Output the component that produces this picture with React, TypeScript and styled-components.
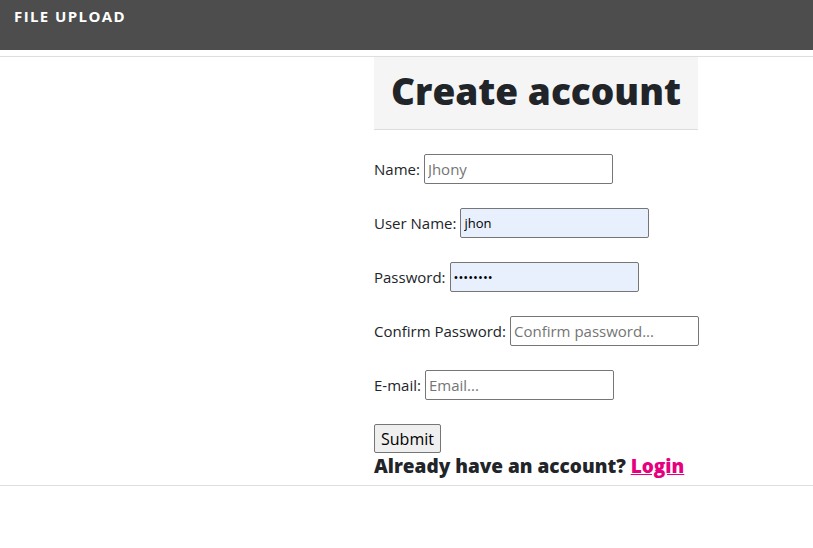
import React from "react";
import styled, { createGlobalStyle } from "styled-components";

const GlobalStyle = createGlobalStyle`
  body {
    margin: 0;
    font-family: "Open Sans", "Noto Sans", sans-serif;
    color: #212529;
    background: #ffffff;
  }
`;

const TopBar = styled.header`
  height: 50px;
  background-color: #4d4d4d;
  padding: 5px 14px 0;
  box-sizing: border-box;
`;

const Brand = styled.span`
  color: #ffffff;
  font-size: 15px;
  font-weight: 700;
  letter-spacing: 1.4px;
`;

const Page = styled.main`
  margin-top: 6px;
  border-top: 1px solid #dedede;
  border-bottom: 1px solid #dedede;
  display: grid;
  grid-template-columns: 374px 324px;
`;

const Panel = styled.section`
  grid-column: 2;
`;

const Heading = styled.h1`
  margin: 0;
  background-color: #f5f5f5;
  border-bottom: 1px solid #dcdcdc;
  height: 73px;
  box-sizing: border-box;
  padding-bottom: 5px;
  display: flex;
  align-items: center;
  justify-content: center;
  font-size: 37px;
  font-weight: 800;
  color: #212529;
`;

const Form = styled.form`
  display: flex;
  flex-direction: column;
  align-items: flex-start;
  padding-top: 24px;
`;

const Field = styled.label`
  display: flex;
  align-items: center;
  gap: 4px;
  font-size: 15px;
  height: 30px;
  margin-bottom: 24px;
  white-space: nowrap;
`;

const Input = styled.input<{ $filled?: boolean }>`
  flex-shrink: 0;
  width: 189px;
  height: 30px;
  box-sizing: border-box;
  border: 1px solid #767676;
  border-radius: 2px;
  padding: 1px 3px;
  font-family: "Open Sans", sans-serif;
  font-size: ${(p) => (p.$filled ? "13px" : "15px")};
  background-color: ${(p) => (p.$filled ? "#e8f0fe" : "#ffffff")};
  color: #000000;

  &::placeholder {
    color: #757575;
  }
`;

const SubmitButton = styled.button`
  font-family: "Open Sans", sans-serif;
  font-size: 16px;
  height: 29px;
  padding: 1px 6px;
  background-color: #efefef;
  border: 1px solid #767676;
  border-radius: 2px;
  color: #000000;
`;

const Footer = styled.p`
  margin: 0 0 5px;
  font-size: 19px;
  line-height: 27px;
  font-weight: 800;
  color: #212529;
`;

const LoginLink = styled.a`
  color: #e6007e;
  text-decoration: underline;
`;

export default function App() {
  return (
    <>
      <GlobalStyle />
      <TopBar>
        <Brand>FILE UPLOAD</Brand>
      </TopBar>
      <Page>
        <Panel>
          <Heading>Create account</Heading>
          <Form onSubmit={(e) => e.preventDefault()}>
            <Field>
              Name: <Input type="text" placeholder="Jhony" />
            </Field>
            <Field>
              User Name: <Input type="text" defaultValue="jhon" $filled />
            </Field>
            <Field>
              Password: <Input type="password" defaultValue="password" $filled />
            </Field>
            <Field>
              Confirm Password:{" "}
              <Input type="password" placeholder="Confirm password..." />
            </Field>
            <Field>
              E-mail: <Input type="email" placeholder="Email..." />
            </Field>
            <SubmitButton type="submit">Submit</SubmitButton>
          </Form>
          <Footer>
            Already have an account? <LoginLink href="#">Login</LoginLink>
          </Footer>
        </Panel>
      </Page>
    </>
  );
}
